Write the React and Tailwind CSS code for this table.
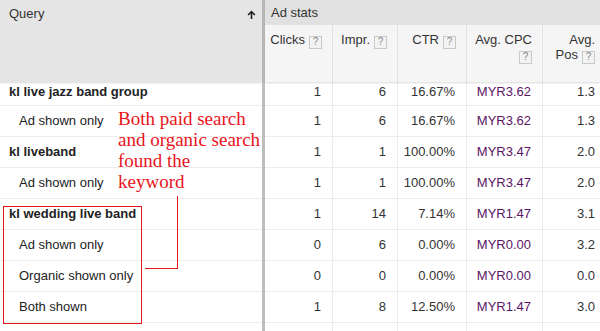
import React from "react";

const Help = () => (
  <span className="inline-flex items-center justify-center w-[13px] h-[13px] border border-[#c9c9c9] bg-[#f3f3f3] text-[10px] leading-none text-[#888] ml-[4px] align-[-1px]">
    ?
  </span>
);

const rows = [
  { q: "kl live jazz band group", bold: true, c: "1", i: "6", ctr: "16.67%", cpc: "MYR3.62", pos: "1.3" },
  { q: "Ad shown only", c: "1", i: "6", ctr: "16.67%", cpc: "MYR3.62", pos: "1.3" },
  { q: "kl liveband", bold: true, c: "1", i: "1", ctr: "100.00%", cpc: "MYR3.47", pos: "2.0" },
  { q: "Ad shown only", c: "1", i: "1", ctr: "100.00%", cpc: "MYR3.47", pos: "2.0" },
  { q: "kl wedding live band", bold: true, c: "1", i: "14", ctr: "7.14%", cpc: "MYR1.47", pos: "3.1" },
  { q: "Ad shown only", c: "0", i: "6", ctr: "0.00%", cpc: "MYR0.00", pos: "3.2" },
  { q: "Organic shown only", c: "0", i: "0", ctr: "0.00%", cpc: "MYR0.00", pos: "0.0" },
  { q: "Both shown", c: "1", i: "8", ctr: "12.50%", cpc: "MYR1.47", pos: "3.0" },
  { q: "", c: "", i: "", ctr: "", cpc: "", pos: "" },
];

const gridCols = "grid grid-cols-[68px_65px_69px_76px_1fr]";

export default function App() {
  return (
    <div className="relative w-[600px] h-[331px] overflow-hidden bg-white text-[13px] text-[#222] font-['Liberation_Sans',Arial,sans-serif]">
      <div className="flex h-full">
        {/* Left panel */}
        <div className="w-[262px] flex flex-col shrink-0">
          <div className="h-[82px] shrink-0 bg-[#e5e5e5] flex items-start justify-between pl-[9px] pr-[6px] pt-[6px] shadow-[0_1px_2px_rgba(0,0,0,0.15)] relative z-10">
            <span className="leading-[16px] text-[#333]">Query</span>
            <svg width="9" height="9" viewBox="0 0 9 9" className="mt-[4px]">
              <path d="M4.5 0.5 L8.5 4.5 L7.3 5.6 L5.3 3.6 L5.3 9 L3.7 9 L3.7 3.6 L1.7 5.6 L0.5 4.5 Z" fill="#222" />
            </svg>
          </div>
          {rows.map((r, idx) => (
            <div
              key={idx}
              className={`${idx === 0 ? "h-[24px] pb-[3px]" : "h-[31px]"} border-b border-[#ececec] flex items-center shrink-0 ${r.bold ? "pl-[9px] font-bold" : "pl-[19px]"}`}
            >
              {r.q}
            </div>
          ))}
        </div>
        {/* Divider */}
        <div className="w-[3px] bg-[#bdbdbd] shrink-0" />
        {/* Right panel */}
        <div className="flex-1 flex flex-col">
          <div className="h-[82px] shrink-0 flex flex-col shadow-[0_1px_2px_rgba(0,0,0,0.15)] relative z-10">
            <div className="h-[25px] shrink-0 bg-[#e1e1e1] flex items-center pl-[6px] text-[#333]">Ad stats</div>
            <div className={`${gridCols} flex-1 bg-[#f5f5f5] text-[#333]`}>
              <div className="border-r border-[#e2e2e2] pt-[8px] pr-[10px] text-right leading-[14px]">
                Clicks<Help />
              </div>
              <div className="border-r border-[#e2e2e2] pt-[8px] pr-[10px] text-right leading-[14px]">
                Impr.<Help />
              </div>
              <div className="border-r border-[#e2e2e2] pt-[8px] pr-[10px] text-right leading-[14px]">
                CTR<Help />
              </div>
              <div className="border-r border-[#e2e2e2] pt-[8px] pr-[10px] text-right leading-[14px]">
                <div>Avg. CPC</div>
                <div className="mt-[1px]">
                  <Help />
                </div>
              </div>
              <div className="pt-[8px] pr-[5px] text-right leading-[14px]">
                <div>Avg.</div>
                <div className="mt-[1px]">
                  Pos<Help />
                </div>
              </div>
            </div>
          </div>
          {rows.map((r, idx) => (
            <div
              key={idx}
              className={`${gridCols} ${idx === 0 ? "h-[24px]" : "h-[31px]"} border-b border-[#ececec] shrink-0 text-[#333]`}
            >
              {[r.c, r.i, r.ctr].map((v, j) => (
                <div key={j} className={`border-r border-[#ececec] flex items-center justify-end pr-[11px] ${idx === 0 ? "pb-[3px]" : ""}`}>
                  {v}
                </div>
              ))}
              <div className={`border-r border-[#ececec] flex items-center justify-end pr-[11px] text-[#5a1565] ${idx === 0 ? "pb-[3px]" : ""}`}>
                {r.cpc}
              </div>
              <div className={`flex items-center justify-end pr-[5px] ${idx === 0 ? "pb-[3px]" : ""}`}>{r.pos}</div>
            </div>
          ))}
        </div>
      </div>

      {/* Annotation overlay */}
      <div className="absolute left-[118px] top-[108px] font-['Liberation_Serif','Times_New_Roman',serif] text-[19px] leading-[21px] text-[#e8141c]">
        <div>Both paid search</div>
        <div>and organic search</div>
        <div>found the</div>
        <div>keyword</div>
      </div>
      {/* Red box around group */}
      <div className="absolute left-[3px] top-[206px] w-[139px] h-[118px] border-[1.5px] border-[#e3161e]" />
      {/* Connector */}
      <div className="absolute left-[145px] top-[196px] w-[33px] h-[73px] border-r-[1.5px] border-b-[1.5px] border-[#e3161e]" />
    </div>
  );
}
